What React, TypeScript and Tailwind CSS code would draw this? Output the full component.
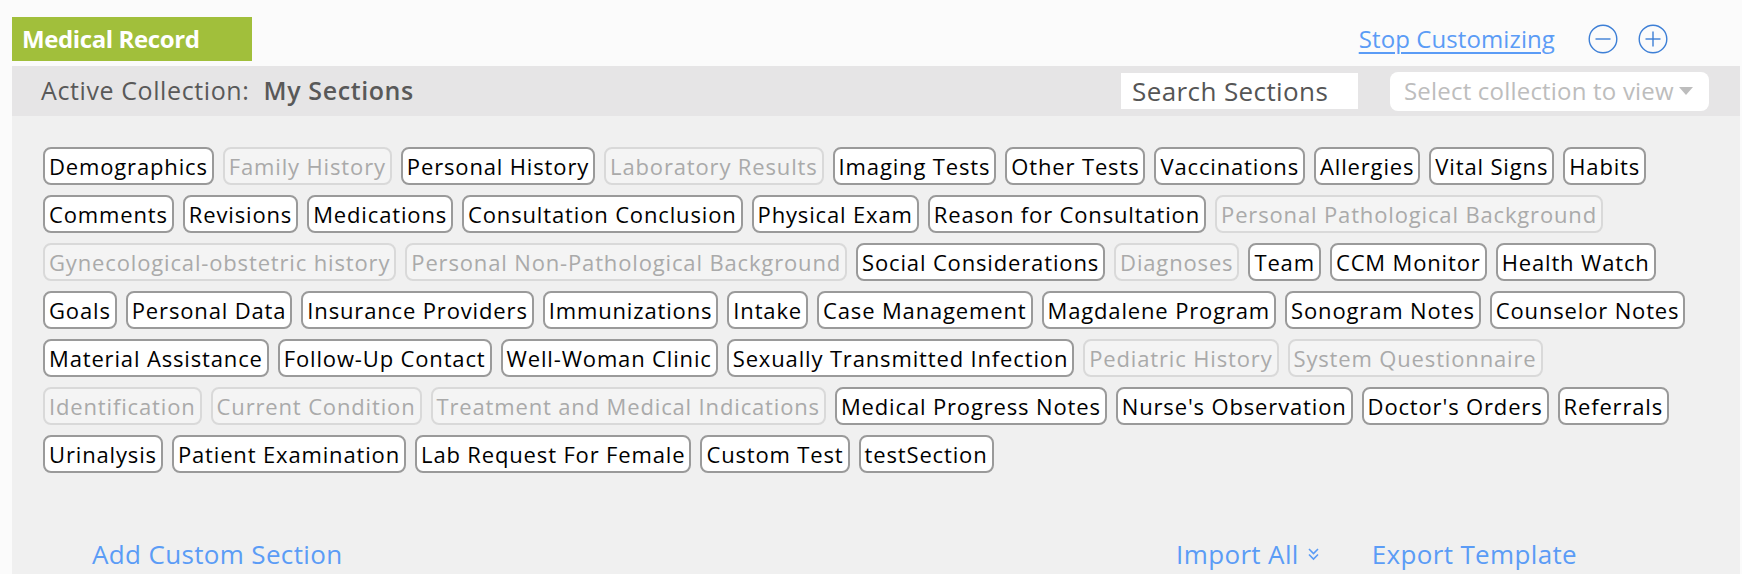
import React from "react";

type Chip = { label: string; off?: boolean };

const rows: Chip[][] = [
  [
    { label: "Demographics" },
    { label: "Family History", off: true },
    { label: "Personal History" },
    { label: "Laboratory Results", off: true },
    { label: "Imaging Tests" },
    { label: "Other Tests" },
    { label: "Vaccinations" },
    { label: "Allergies" },
    { label: "Vital Signs" },
    { label: "Habits" },
  ],
  [
    { label: "Comments" },
    { label: "Revisions" },
    { label: "Medications" },
    { label: "Consultation Conclusion" },
    { label: "Physical Exam" },
    { label: "Reason for Consultation" },
    { label: "Personal Pathological Background", off: true },
  ],
  [
    { label: "Gynecological-obstetric history", off: true },
    { label: "Personal Non-Pathological Background", off: true },
    { label: "Social Considerations" },
    { label: "Diagnoses", off: true },
    { label: "Team" },
    { label: "CCM Monitor" },
    { label: "Health Watch" },
  ],
  [
    { label: "Goals" },
    { label: "Personal Data" },
    { label: "Insurance Providers" },
    { label: "Immunizations" },
    { label: "Intake" },
    { label: "Case Management" },
    { label: "Magdalene Program" },
    { label: "Sonogram Notes" },
    { label: "Counselor Notes" },
  ],
  [
    { label: "Material Assistance" },
    { label: "Follow-Up Contact" },
    { label: "Well-Woman Clinic" },
    { label: "Sexually Transmitted Infection" },
    { label: "Pediatric History", off: true },
    { label: "System Questionnaire", off: true },
  ],
  [
    { label: "Identification", off: true },
    { label: "Current Condition", off: true },
    { label: "Treatment and Medical Indications", off: true },
    { label: "Medical Progress Notes" },
    { label: "Nurse's Observation" },
    { label: "Doctor's Orders" },
    { label: "Referrals" },
  ],
  [
    { label: "Urinalysis" },
    { label: "Patient Examination" },
    { label: "Lab Request For Female" },
    { label: "Custom Test" },
    { label: "testSection" },
  ],
];

function CircleIcon({ plus }: { plus?: boolean }) {
  return (
    <svg width="30" height="30" viewBox="0 0 30 30" fill="none">
      <circle cx="15" cy="15" r="13.8" stroke="#3d7fd6" strokeWidth="1.4" />
      <line x1="7.5" y1="15" x2="22.5" y2="15" stroke="#3d7fd6" strokeWidth="1.4" />
      {plus && <line x1="15" y1="7.5" x2="15" y2="22.5" stroke="#3d7fd6" strokeWidth="1.4" />}
    </svg>
  );
}

export default function App() {
  return (
    <div className="flex h-screen flex-col overflow-hidden bg-[#fbfbfb] font-['Open_Sans',sans-serif]">
      {/* top row */}
      <div className="flex items-center justify-between pl-[12px] pr-[74px] pt-[17px]">
        <div className="flex h-[44px] w-[240px] items-center bg-[#a1bf3b] pl-[10px] text-[24px] font-bold tracking-[-0.4px] text-white">
          Medical Record
        </div>
        <div className="flex items-center">
          <span className="text-[24px] tracking-[0.1px] text-[#5b9cf6] underline underline-offset-[4px] decoration-[1.5px]">
            Stop Customizing
          </span>
          <span className="ml-[33px] flex">
            <CircleIcon />
          </span>
          <span className="ml-[20px] flex">
            <CircleIcon plus />
          </span>
        </div>
      </div>

      {/* collection bar */}
      <div className="ml-[12px] mr-[2px] mt-[5px] flex h-[50px] items-center bg-[#e6e5e6] pl-[29px] pr-[31px]">
        <div className="flex-1 text-[25px] tracking-[0.6px] text-[#595959]">
          Active Collection:&nbsp; <span className="font-semibold">My Sections</span>
        </div>
        <div className="flex h-[36px] w-[237px] items-center overflow-hidden whitespace-nowrap bg-white pl-[11px] text-[26px] tracking-[0.4px] text-[#555]">
          Search Sections
        </div>
        <div className="ml-[32px] flex h-[39px] w-[319px] items-center whitespace-nowrap rounded-[8px] bg-white pl-[14px] text-[24px] tracking-[0.2px] text-[#bdbdbd]">
          <span>Select collection to view</span>
          <svg className="ml-[5px]" width="14" height="8" viewBox="0 0 14 8">
            <path d="M0 0 L14 0 L7 8 Z" fill="#bdbdbd" />
          </svg>
        </div>
      </div>

      {/* body */}
      <div className="ml-[12px] mr-[2px] flex flex-1 flex-col bg-[#f0f0f0] pl-[31px] pt-[31px]">
        <div className="flex flex-col gap-[10px]">
          {rows.map((row, i) => (
            <div key={i} className="flex gap-[9px]">
              {row.map((c) => (
                <div
                  key={c.label}
                  className={
                    c.off
                      ? "whitespace-nowrap rounded-[8px] border-2 border-[#d9d9d9] bg-[#f4f4f4] px-[4px] text-[22px] leading-[34px] tracking-[0.85px] text-[#aaaaaa]"
                      : "whitespace-nowrap rounded-[8px] border-2 border-[#9a9a9a] bg-white px-[4px] text-[22px] leading-[34px] tracking-[0.85px] text-black"
                  }
                >
                  {c.label}
                </div>
              ))}
            </div>
          ))}
        </div>

        <div className="mt-[65px] flex items-center whitespace-nowrap pl-[49px] text-[26px] leading-[32px] tracking-[0.35px] text-[#5b9cf6]">
          <span>Add Custom Section</span>
          <span className="ml-auto flex items-center">
            Import All
            <svg className="ml-[8px]" width="13" height="14" viewBox="0 0 13 14" fill="none">
              <path d="M2 2 L6.5 6.5 L11 2 M2 7.5 L6.5 12 L11 7.5" stroke="#5b9cf6" strokeWidth="1.6" />
            </svg>
          </span>
          <span className="ml-[52px] mr-[163px]">Export Template</span>
        </div>
      </div>
    </div>
  );
}
